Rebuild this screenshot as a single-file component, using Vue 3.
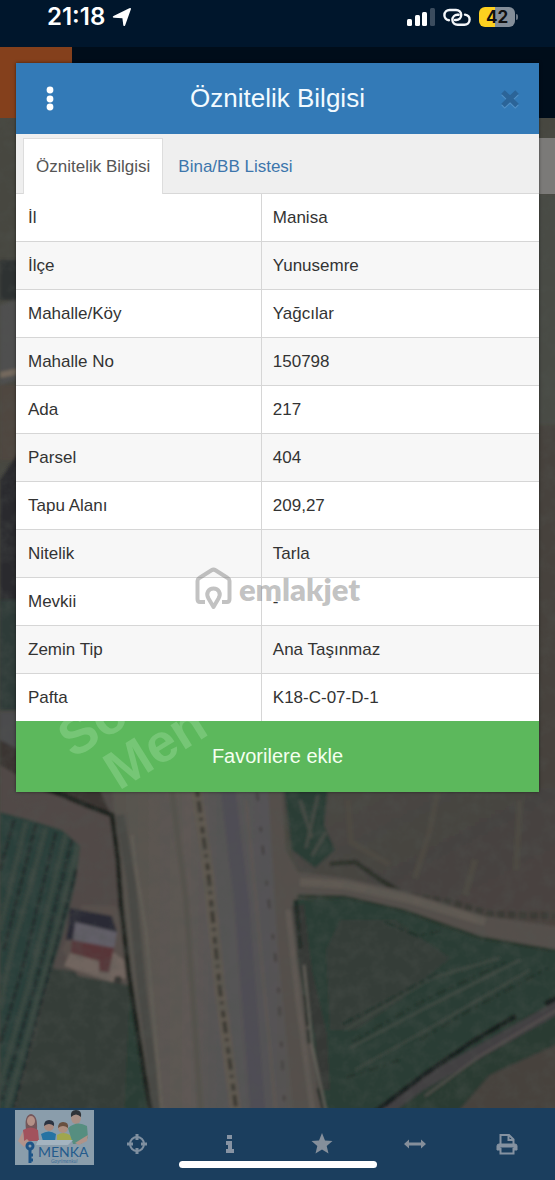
<template>
  <div class="screen">
    <!-- Satellite map behind everything -->
    <svg class="map" viewBox="0 0 555 1180" preserveAspectRatio="xMidYMid slice" aria-hidden="true">
      <defs>
        <filter id="soft" x="-5%" y="-5%" width="110%" height="110%">
          <feGaussianBlur stdDeviation="1.5" />
        </filter>
        <filter id="grain" x="0" y="0" width="100%" height="100%">
          <feTurbulence type="fractalNoise" baseFrequency="0.07" numOctaves="4" seed="8" />
          <feColorMatrix values="0 0 0 0 0.08  0 0 0 0 0.09  0 0 0 0 0.08  1.6 0 0 0 -0.62" />
        </filter>
        <linearGradient id="road" x1="0" x2="1" y1="0" y2="0">
          <stop offset="0" stop-color="#57524d" />
          <stop offset="0.4" stop-color="#5e5954" />
          <stop offset="0.55" stop-color="#575455" />
          <stop offset="0.8" stop-color="#555356" />
          <stop offset="1" stop-color="#59534d" />
        </linearGradient>
        <linearGradient id="soil" x1="0" x2="1" y1="0" y2="1">
          <stop offset="0" stop-color="#4b4744" />
          <stop offset="0.5" stop-color="#454340" />
          <stop offset="1" stop-color="#4b433e" />
        </linearGradient>
      </defs>

      <rect width="555" height="1180" fill="#474740" />
      <g filter="url(#soft)">
        <!-- left edge -->
        <path d="M0 260h20v40H0z" fill="#2f3130" />
        <path d="M0 305l20 -6v80l-20 6z" fill="#4f4f50" />
        <path d="M0 372l20 -4v6l-20 4z" fill="#75695d" />
        <path d="M0 385h20v75H0z" fill="#50463f" />
        <path d="M0 480l20 -30v150H0z" fill="#2c2a2d" />
        <path d="M0 600h20v110H0z" fill="#2f3b37" />
        <path d="M0 712h20v60H0z" fill="#4c4b4e" />
        <!-- right edge -->
        <path d="M535 194h25v230h-25z" fill="#494b45" />
        <path d="M535 424h25v376h-25z" fill="#46423d" />

        <!-- dirt ground and field on the left -->
        <path d="M0 745L60 780L130 790L150 1115H0z" fill="#514a47" />
        <path d="M0 765L45 792L110 812L100 790L0 740z" fill="#3a3431" />
        <path d="M0 812L30 820L62 830L80 846L76 880L64 930L40 1010L12 1115H0z" fill="#2c3f3a" />
        <g stroke="#38463f" stroke-width="5" fill="none">
          <path d="M26 822L0 930" />
          <path d="M46 828L8 965L0 1010" />
          <path d="M66 834L30 980L0 1085" />
          <path d="M78 846L48 960L6 1112" />
        </g>
        <g stroke="#222c2a" stroke-width="3" stroke-dasharray="9 2" fill="none">
          <path d="M14 820L0 870" />
          <path d="M36 824L4 950" />
          <path d="M56 832L22 970L0 1045" />
          <path d="M72 840L38 975L2 1100" />
          <path d="M76 870L50 968L14 1108" />
        </g>
        <path d="M52 968L128 980L142 1050L148 1115H14z" fill="#363c37" />
        <path d="M130 990L148 1115H124z" fill="#2a3d36" />
        <path d="M62 950L82 905L116 906L126 935L130 985L78 976z" fill="#58504c" />

        <!-- small house -->
        <path d="M70 908L112 916L117 932L115 940L66 940z" fill="#292c35" />
        <path d="M75 922L117 932L114 948L73 941z" fill="#625e68" />
        <path d="M72 940L114 948L109 972L100 971L99 961L71 953z" fill="#583439" />
        <path d="M70 953L99 961V972L109 973L113 952L124 960L126 978L112 982L64 966z" fill="#71655e" />
        <circle cx="118" cy="980" r="4" fill="#393735" />

        <!-- main road -->
        <path d="M112 788H272L305 1115H150L138 1040L124 908L114 815z" fill="url(#road)" />
        <path d="M120 815L131 880L142 990L158 1115" stroke="#484844" stroke-width="9" fill="none" />
        <path d="M132 835L136 870L146 930L162 1115" stroke="#645e57" stroke-width="3" fill="none" />
        <path d="M172 792L186 900L201 1115" stroke="#56524e" stroke-width="6" fill="none" />
        <path d="M196 790L208 870L220 990L236 1115" stroke="#605a51" stroke-width="11" fill="none" />
        <path d="M197 790L208 870L220 990L237 1115" stroke="#3b3733" stroke-width="4" stroke-dasharray="7 4 12 5 3 6" fill="none" />
        <path d="M228 790L242 905L258 1115" stroke="#504e54" stroke-width="15" fill="none" />
        <path d="M246 800L256 900L276 1115" stroke="#5d5752" stroke-width="3" fill="none" />
        <path d="M257 792L265 870L278 980L285 1115" stroke="#3e3a37" stroke-width="2" stroke-dasharray="9 26 5 14" fill="none" />
        <path d="M46 788L88 806L112 815L118 860L121 905L129 975L139 1040L151 1115" stroke="#1e221f" stroke-width="5" fill="none" />

        <!-- fields right of the road -->
        <path d="M280 788H560V935L470 915L375 890L296 870z" fill="url(#soil)" />
        <path d="M284 788H328L324 825L335 850L315 868L292 850z" fill="#2a3c36" />
        <path d="M300 800L312 838M318 795L306 848M326 832L312 856" stroke="#464b45" stroke-width="3" fill="none" />
        <path d="M348 800L351 842L390 865M415 878L430 830L438 790M465 895L475 860M520 800L516 870" stroke="#4e4843" stroke-width="6" fill="none" />
        <path d="M330 864L355 862L382 881L400 892" stroke="#2b2d28" stroke-width="5" fill="none" />
        <path d="M400 895L450 902L490 914L555 916" stroke="#3a3a35" stroke-width="7" stroke-dasharray="8 3" fill="none" />
        <path d="M268 788H282L286 850L298 872L345 878L400 890L485 916L560 927V952L530 945L480 935L405 910L345 898L296 896L298 960L323 1115H294L278 950z" fill="#55504b" />
        <path d="M300 882L345 885L405 898L485 922" stroke="#615a53" stroke-width="8" fill="none" />
        <path d="M293 900L298 960L323 1115H560V950L480 937L405 911L345 898z" fill="#2b3e36" />
        <path d="M326 950L340 920L395 920L450 958L400 1000L355 1030L330 1030z" fill="#343d38" />
        <path d="M298 896L345 897L405 911L480 938L555 951" stroke="#26342c" stroke-width="3" fill="none" />
        <path d="M298 905L306 970L321 1035L324 1090" stroke="#353835" stroke-width="12" fill="none" />
        <path d="M288 910L298 1000L313 1115" stroke="#605a54" stroke-width="5" fill="none" />
        <path d="M296 900L301 955L311 1060L324 1112" stroke="#1c2620" stroke-width="3" stroke-dasharray="32 3 14 46" fill="none" />
        <path d="M304 965L312 1045L326 1112" stroke="#6c6861" stroke-width="2" fill="none" />
        <g stroke="#434b44" stroke-width="2" fill="none">
          <path d="M345 1030L432 978L500 958" />
          <path d="M350 1048L425 1008L520 960" />
          <path d="M355 1070L430 1028L530 970" />
        </g>
        <g stroke="#23332c" stroke-width="3" stroke-dasharray="12 3 5 4" fill="none">
          <path d="M343 1024L400 994L440 972" />
          <path d="M352 1042L425 1000L506 962" />
          <path d="M420 1040L470 1010L548 968" />
          <path d="M385 922L418 936L445 930" />
          <path d="M345 1078L400 1060" />
        </g>

        <!-- lower right track -->
        <path d="M385 1115L445 1070L520 1018L560 1000V1115z" fill="#2c3b33" />
        <path d="M384 1112L420 1085L500 1040L560 1006" stroke="#433f43" stroke-width="12" fill="none" />
        <path d="M375 1112L425 1074L475 1040L516 1016M545 1004L560 996" stroke="#181f1b" stroke-width="5" fill="none" />
        <path d="M425 1096L480 1056L560 1008" stroke="#57524f" stroke-width="2" fill="none" />
        <path d="M455 1115L490 1075L560 1043V1115z" fill="#47433d" />
      </g>
      <rect width="555" height="1180" filter="url(#grain)" opacity="0.4" />
    </svg>

    <div class="page-header"><div class="page-logo"></div></div>
    <div class="map-tool"></div>

    <header class="status-bar">
      <div class="status-time">
        <span>21:18</span>
        <svg width="20" height="20" viewBox="0 0 20 20" aria-hidden="true">
          <path d="M1.500 9L17.300 1.200Q19.500 .3 18.800 2.600L13.200 18.200Q12.200 20 11.300 18.200L10.400 11.200L2 10.800Q-.2 10.300 1.500 9Z" fill="#fff" />
        </svg>
      </div>
      <div class="status-icons">
        <svg width="28" height="20" viewBox="0 0 28 20" aria-hidden="true">
          <rect x="0" y="12" width="5" height="7" rx="1.5" fill="#fff" />
          <rect x="8" y="8" width="5" height="11" rx="1.5" fill="#fff" />
          <rect x="15" y="5" width="5" height="14" rx="1.5" fill="#fff" />
          <rect x="23" y="1" width="5" height="18" rx="1.5" fill="#3b4c5e" />
        </svg>
        <svg width="28" height="20" viewBox="0 0 28 20" fill="none" stroke="#f4f7fa" stroke-width="2.4" stroke-linecap="round" aria-hidden="true">
          <path d="M6 13.200C3 12.800 1.400 10.400 1.400 8.200C1.400 5.200 3.800 3 6.600 3H13C16 3 18.200 5.200 18.200 8C18.200 10.800 16 13 13.200 13H12" />
          <path d="M22 7.600C25 8 26.600 10.200 26.600 12.600C26.600 15.600 24.200 17.800 21.400 17.800H14.600C11.600 17.800 9.400 15.600 9.400 12.800C9.400 10 11.600 7.800 14.400 7.800H15.600" />
        </svg>
        <span class="battery">42</span>
      </div>
    </header>

    <section class="dialog" role="dialog" aria-labelledby="dialog-title">
      <div class="dialog-header">
        <button class="icon-btn menu-btn" type="button" aria-label="Menü">
          <svg width="8" height="26" viewBox="0 0 8 26" fill="#fff">
            <circle cx="4" cy="4" r="3.4" />
            <circle cx="4" cy="13" r="3.4" />
            <circle cx="4" cy="21" r="3.4" />
          </svg>
        </button>
        <h1 id="dialog-title">Öznitelik Bilgisi</h1>
        <button class="icon-btn" type="button" aria-label="Kapat">
          <svg width="20" height="20" viewBox="0 0 20 20">
            <path d="M3 4.500L17 18M17 4.500L3 18" stroke="#5190c6" stroke-width="5" />
            <path d="M3 3L17 16.500M17 3L3 16.500" stroke="#2b6498" stroke-width="5" />
          </svg>
        </button>
      </div>

      <nav class="tabs">
        <a
          v-for="tab in tabs"
          :key="tab"
          href="#"
          class="tab"
          :class="{ active: tab === activeTab }"
          @click.prevent="activeTab = tab"
        >{{ tab }}</a>
      </nav>

      <div class="table-wrap">
        <table>
          <tbody>
            <tr v-for="row in rows" :key="row.label">
              <th scope="row">{{ row.label }}</th>
              <td>{{ row.value }}</td>
            </tr>
          </tbody>
        </table>
        <div class="brand-mark">
          <svg width="37" height="44" viewBox="0 0 37 44" fill="none" stroke="currentColor" stroke-width="4" stroke-linejoin="round" aria-hidden="true">
            <path d="M10 35H5Q2.500 35 2.500 32V14Q2.500 12 4.300 11L16.500 3.300Q18.500 2 20.500 3.300L32.700 11Q34.500 12 34.500 14V32Q34.500 35 32 35H27" />
            <path d="M18.500 40L13.500 31.500C10.500 26 13.500 21.500 18.500 21.500S26.500 26 23.500 31.500Z" />
          </svg>
          <span>emlakjet</span>
        </div>
      </div>

      <button class="fav-btn" type="button">
        <svg class="fav-mark" width="230" height="71" viewBox="0 0 230 71" aria-hidden="true">
          <text transform="translate(57 38) rotate(-32)">So</text>
          <text transform="translate(103 70) rotate(-32)">Men</text>
        </svg>
        <span>Favorilere ekle</span>
      </button>
    </section>

    <footer class="toolbar">
      <div class="slot logo-slot">
        <svg class="menka" width="79" height="55" viewBox="0 0 79 55" role="img" aria-label="Menka">
          <rect width="79" height="55" fill="#8a9dab" />
          <!-- family -->
          <path d="M11 20Q9 5 16 4Q23 5 22 20Z" fill="#74565a" />
          <ellipse cx="16" cy="11" rx="4" ry="5" fill="#b39087" />
          <path d="M8 20Q16 15 23 20L24 31H9Z" fill="#a2525d" />
          <path d="M8 21L3 31L9 37L15 32L12 29L9 31Z" fill="#b1938b" />
          <circle cx="34" cy="16" r="5" fill="#a98a7f" />
          <path d="M29 16Q29 10 34 10Q40 10 39 16Q34 12 29 16Z" fill="#2b3340" />
          <path d="M26 24Q34 19 41 24L40 31H28Z" fill="#2673a3" />
          <circle cx="48" cy="18" r="5" fill="#ae8f80" />
          <path d="M43 18Q43 12 48 12Q54 12 53 18Q48 14 43 18Z" fill="#69503f" />
          <path d="M42 25Q48 21 55 25L58 31H42Z" fill="#a0a64e" />
          <ellipse cx="61" cy="8" rx="5" ry="6" fill="#a88f85" />
          <path d="M56 7Q55 0 61 0Q67 0 66 7Q61 2 56 7Z" fill="#2f3338" />
          <path d="M53 18Q62 10 72 16L73 28L66 34H58Z" fill="#568e80" />
          <path d="M73 25L72 31L64 35L60 33L68 28Z" fill="#ae9389" />
          <path d="M23 30H58L53 35H21Z" fill="#a4b4c0" />
          <!-- key -->
          <circle cx="15" cy="36" r="3" fill="none" stroke="#1e5487" stroke-width="3" />
          <path d="M15 39V53M15 45H18M15 50H18" stroke="#1e5487" stroke-width="3" />
          <text x="23" y="47" class="menka-name">MENKA</text>
          <text x="36" y="53" class="menka-sub">Gayrimenkul</text>
        </svg>
      </div>
      <button v-for="tool in tools" :key="tool.name" class="slot tool" type="button" :aria-label="tool.label">
        <svg width="22" height="22" viewBox="0 0 22 22" aria-hidden="true">
          <g v-if="tool.name === 'locate'" fill="none" stroke="#7f8fa0" stroke-width="2">
            <circle cx="11" cy="11" r="7" />
            <path d="M11 1V7M11 15V21M1 11H7M15 11H21" stroke-width="3" />
          </g>
          <path v-else-if="tool.name === 'info'" d="M8 2H13V6H8ZM7 8H13V16H15V20H7V16H9V12H7Z" fill="#8793a3" />
          <path v-else-if="tool.name === 'favorite'" d="M11 0L14 7.500L21.500 8L15.700 13L17.500 20.500L11 16.500L4.500 20.500L6.300 13L.5 8L8 7.500Z" fill="#858f9b" />
          <path v-else-if="tool.name === 'measure'" d="M0 11L5 6.500V9.500H17V6.500L22 11L17 15.500V12.500H5V15.500Z" fill="#858f9b" />
          <g v-else fill="none" stroke="#8592a1" stroke-width="2">
            <path d="M4.500 11V2H13L17.500 6.500V11M12.500 2V7H17" />
            <path d="M1 17V13Q1 11 3 11H19Q21 11 21 13V17H18V14H4V17Z" fill="#8592a1" stroke-width="1" />
            <path d="M4.500 15V20.500H17.500V15" />
          </g>
        </svg>
      </button>
      <div class="home-indicator"></div>
    </footer>
  </div>
</template>

<script setup>
import { ref } from 'vue'

const tabs = ['Öznitelik Bilgisi', 'Bina/BB Listesi']
const activeTab = ref(tabs[0])

const rows = [
  { label: 'İl', value: 'Manisa' },
  { label: 'İlçe', value: 'Yunusemre' },
  { label: 'Mahalle/Köy', value: 'Yağcılar' },
  { label: 'Mahalle No', value: '150798' },
  { label: 'Ada', value: '217' },
  { label: 'Parsel', value: '404' },
  { label: 'Tapu Alanı', value: '209,27' },
  { label: 'Nitelik', value: 'Tarla' },
  { label: 'Mevkii', value: '-' },
  { label: 'Zemin Tip', value: 'Ana Taşınmaz' },
  { label: 'Pafta', value: 'K18-C-07-D-1' },
]

const tools = [
  { name: 'locate', label: 'Konum' },
  { name: 'info', label: 'Bilgi' },
  { name: 'favorite', label: 'Favoriler' },
  { name: 'measure', label: 'Ölçüm' },
  { name: 'print', label: 'Yazdır' },
]
</script>

<style>
body {
  margin: 0;
  background: #474740;
}
</style>

<style scoped>
.screen {
  position: relative;
  display: flex;
  flex-direction: column;
  min-height: 100vh;
  overflow: hidden;
  font-family: "Liberation Sans", Arial, sans-serif;
  color: #333;
}

.screen * {
  box-sizing: border-box;
}

button {
  border: 0;
  padding: 0;
  background: none;
  font-family: inherit;
  cursor: pointer;
}

/* ── Backdrop ── */
.map {
  position: absolute;
  inset: 0;
  width: 100%;
  height: 100%;
}

.page-header {
  position: absolute;
  top: 47px;
  left: 0;
  right: 0;
  height: 71px;
  background: #000d1a;
}

.page-logo {
  width: 72px;
  height: 100%;
  background: #84401c;
}

.map-tool {
  position: absolute;
  top: 138px;
  right: 0;
  width: 48px;
  height: 56px;
  background: #7b7a78;
}

/* ── Status bar ── */
.status-bar {
  position: relative;
  display: flex;
  justify-content: space-between;
  height: 47px;
  padding: 7px 40px 0 47px;
  background: #00162c;
}

.status-time,
.status-icons {
  display: flex;
  align-items: center;
  height: 20px;
  color: #fff;
}

.status-time {
  gap: 7px;
  font: 600 24px/20px Inter, sans-serif;
}

.status-icons {
  gap: 8px;
}

.battery {
  position: relative;
  width: 36px;
  height: 20px;
  border-radius: 6px;
  background: linear-gradient(90deg, #fdd01f 44%, #848e99 44%);
  color: #111;
  font: 700 17px/20px Inter, sans-serif;
  text-align: center;
}

.battery::after {
  content: "";
  position: absolute;
  top: 7px;
  right: -3px;
  width: 2px;
  height: 6px;
  border-radius: 0 2px 2px 0;
  background: #6b7785;
}

/* ── Dialog ── */
.dialog {
  position: relative;
  margin: 16px 16px 0;
  background: #fff;
  box-shadow: 0 0 3px rgba(0, 0, 0, 0.5);
}

.dialog-header {
  display: flex;
  align-items: center;
  height: 71px;
  background: #337ab7;
}

.dialog-header h1 {
  flex: 1;
  margin: 0;
  font-size: 26px;
  font-weight: 400;
  text-align: center;
  color: #f2faff;
}

.icon-btn {
  display: flex;
  align-items: center;
  justify-content: center;
  width: 58px;
  height: 44px;
}

.menu-btn {
  padding-left: 10px;
}

.tabs {
  display: flex;
  height: 60px;
  padding: 4px 7px 0;
  border-bottom: 1px solid #d8d8d8;
  background: #efefef;
}

.tab {
  height: 56px;
  padding: 0 12px;
  border: 1px solid transparent;
  border-bottom: 0;
  margin-right: 2px;
  color: #3d76ac;
  font-size: 17px;
  line-height: 56px;
  text-decoration: none;
}

.tab.active {
  border-color: #ddd;
  background: #fff;
  color: #555;
}

.table-wrap {
  position: relative;
}

table {
  width: 100%;
  border-collapse: separate;
  border-spacing: 0;
  table-layout: fixed;
}

th,
td {
  height: 48px;
  padding: 0 11px;
  border-bottom: 1px solid #d6d6d6;
  font-size: 17px;
  font-weight: 400;
  text-align: left;
}

th {
  width: 47%;
  padding-left: 12px;
  border-right: 1px solid #d6d6d6;
}

tr:nth-child(even) {
  background: #f7f7f7;
}

tr:last-child th,
tr:last-child td {
  height: 47px;
  border-bottom: 0;
}

.brand-mark {
  position: absolute;
  top: 373px;
  left: 0;
  right: 0;
  display: flex;
  align-items: center;
  justify-content: center;
  gap: 7px;
  color: rgba(120, 120, 120, 0.45);
  font: 800 31px/36px Lato, sans-serif;
  pointer-events: none;
}

.fav-btn {
  position: relative;
  display: block;
  width: 100%;
  height: 71px;
  overflow: hidden;
  background: #5cb85c;
  color: #f4fff0;
  font-size: 20px;
}

.fav-btn span {
  position: relative;
}

.fav-mark {
  position: absolute;
  top: 0;
  left: 0;
  fill: #76c676;
  font-size: 54px;
  font-weight: 700;
}

/* ── Bottom toolbar ── */
.toolbar {
  position: relative;
  display: grid;
  grid-template-columns: repeat(6, 1fr);
  height: 72px;
  margin-top: auto;
  background: #1b3e5e;
}

.slot {
  display: flex;
  align-items: center;
  justify-content: center;
  min-width: 0;
}

.tool {
  padding-right: 3px;
}

.logo-slot {
  align-items: flex-start;
  justify-content: flex-start;
  padding: 2px 0 0 15px;
}

.menka {
  flex: none;
}

.menka-name {
  fill: #245b8c;
  font: 400 14px Lato, sans-serif;
}

.menka-sub {
  fill: #3f6f99;
  font: italic 5px Lato, sans-serif;
}

.home-indicator {
  position: absolute;
  bottom: 12px;
  left: 50%;
  width: 198px;
  height: 7px;
  margin-left: -99px;
  border-radius: 4px;
  background: #fff;
}
</style>
